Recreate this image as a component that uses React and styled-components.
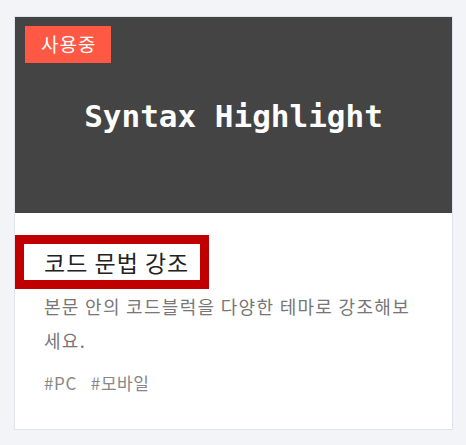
import React from 'react'
import styled, { createGlobalStyle } from 'styled-components'

const Global = createGlobalStyle`
    body {
        margin: 0;
        background: #f2f4f7;
        font-family: "Noto Sans CJK KR", "Noto Sans", sans-serif;
    }
`

const Page = styled.div`
    padding: 16px 13px 14px 14px;
`

const Card = styled.div`
    width: 437px;
    background: #fff;
    border: 1px solid #dfe3ec;
`

const Thumb = styled.div`
    position: relative;
    height: 196px;
    background: #444444;
    display: flex;
    align-items: center;
    justify-content: center;
`

const Badge = styled.span`
    position: absolute;
    top: 9px;
    left: 10px;
    height: 37px;
    padding: 0 15px 0 16px;
    background: #ff5844;
    color: #fff;
    font-size: 19px;
    letter-spacing: 1px;
    line-height: 36px;
`

const ThumbText = styled.div`
    color: #fff;
    font-family: "DejaVu Sans Mono", monospace;
    font-weight: bold;
    font-size: 31px;
    margin-top: 2px;
`

const Body = styled.div`
    padding: 22px 30px 34px 29px;
`

const Title = styled.h3`
    display: inline-block;
    margin: 0 0 0 -29px;
    padding: 0 11px 0 20px;
    border: 9px solid #c00000;
    font-size: 23px;
    font-weight: 400;
    letter-spacing: 1px;
    line-height: 36px;
    color: #222;
`

const Desc = styled.p`
    margin: 0;
    font-size: 18px;
    letter-spacing: 1.3px;
    line-height: 34px;
    color: #777;
`

const Tags = styled.div`
    display: flex;
    gap: 14px;
    margin-top: 13px;
    font-size: 17px;
    letter-spacing: 0.6px;
    line-height: 25px;
    color: #888;
`

export default function App() {
    return (
        <Page>
            <Global />
            <Card>
                <Thumb>
                    <Badge>사용중</Badge>
                    <ThumbText>Syntax Highlight</ThumbText>
                </Thumb>
                <Body>
                    <Title>코드 문법 강조</Title>
                    <Desc>본문 안의 코드블럭을 다양한 테마로 강조해보세요.</Desc>
                    <Tags>
                        <span>#PC</span>
                        <span>#모바일</span>
                    </Tags>
                </Body>
            </Card>
        </Page>
    )
}
